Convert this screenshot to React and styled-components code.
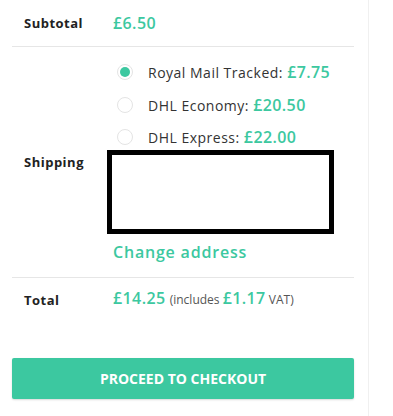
import styled, { createGlobalStyle } from "styled-components";

const GlobalStyle = createGlobalStyle`
  body {
    margin: 0;
    background: #fff;
    font-family: "Open Sans", "Liberation Sans", sans-serif;
    color: #333;
  }
`;

const green = "#3cc8a0";

const Page = styled.div`
  display: flex;
  min-height: 416px;
`;

const Totals = styled.div`
  width: 342px;
  margin-left: 12px;
`;

const Side = styled.div`
  width: 1px;
  margin-left: 14px;
  background: #f0f0f0;
  align-self: stretch;
`;

const Row = styled.div`
  display: grid;
  grid-template-columns: 89px 1fr;
  align-items: center;
  border-bottom: ${(p) => (p.last ? "none" : "1px solid #e6e6e6")};
`;

const Label = styled.div`
  padding: 12px;
  font-size: 13px;
  font-weight: 700;
  letter-spacing: 0.5px;
  color: #222;
`;

const Value = styled.div`
  padding: ${(p) => p.pad || "12px"};
`;

const Amount = styled.span`
  color: ${green};
  font-size: ${(p) => p.size || "16px"};
  font-weight: 600;
  letter-spacing: 0.4px;
`;

const Methods = styled.ul`
  list-style: none;
  margin: 0;
  padding: 0 0 0 4px;
`;

const Method = styled.li`
  display: flex;
  align-items: center;
  gap: 15px;
  height: 32.5px;
  font-size: 14px;
  letter-spacing: 0.5px;
  color: #333;
`;

const Radio = styled.span`
  width: 16px;
  height: 16px;
  box-sizing: border-box;
  border-radius: 50%;
  border: 1px solid #e4e4e4;
  display: flex;
  align-items: center;
  justify-content: center;
  &::after {
    content: "";
    width: 10px;
    height: 10px;
    border-radius: 50%;
    background: ${(p) => (p.checked ? green : "transparent")};
  }
`;

const Address = styled.div`
  margin: -4px 8px 0 -6px;
  height: 84px;
  box-sizing: border-box;
  border: 5px solid #000;
`;

const ChangeLink = styled.a`
  display: block;
  margin-top: 7px;
  color: ${green};
  font-size: 16px;
  font-weight: 600;
  letter-spacing: 0.8px;
  text-decoration: none;
`;

const Small = styled.small`
  font-size: 12px;
  color: #555;
`;

const Checkout = styled.button`
  display: block;
  width: 100%;
  height: 41px;
  margin-top: 35px;
  border: none;
  border-radius: 2px;
  background: ${green};
  color: #fff;
  font-family: inherit;
  font-size: 14px;
  font-weight: 700;
  box-shadow: 0 1px 2px rgba(0, 0, 0, 0.15);
`;

const methods = [
  { name: "Royal Mail Tracked", price: "£7.75", checked: true },
  { name: "DHL Economy", price: "£20.50" },
  { name: "DHL Express", price: "£22.00" },
];

export default function App() {
  return (
    <>
      <GlobalStyle />
      <Page>
        <Totals>
          <Row>
            <Label>Subtotal</Label>
            <Value>
              <Amount>£6.50</Amount>
            </Value>
          </Row>
          <Row>
            <Label>Shipping</Label>
            <Value pad="9px 12px 14px">
              <Methods>
                {methods.map((m) => (
                  <Method key={m.name}>
                    <Radio checked={m.checked} />
                    <span>
                      {m.name}: <Amount>{m.price}</Amount>
                    </span>
                  </Method>
                ))}
              </Methods>
              <Address />
              <ChangeLink href="#">Change address</ChangeLink>
            </Value>
          </Row>
          <Row last>
            <Label>Total</Label>
            <Value pad="9px 12px 14px">
              <Amount>£14.25</Amount> <Small>(includes <Amount>£1.17</Amount> VAT)</Small>
            </Value>
          </Row>
          <Checkout>PROCEED TO CHECKOUT</Checkout>
        </Totals>
        <Side />
      </Page>
    </>
  );
}
